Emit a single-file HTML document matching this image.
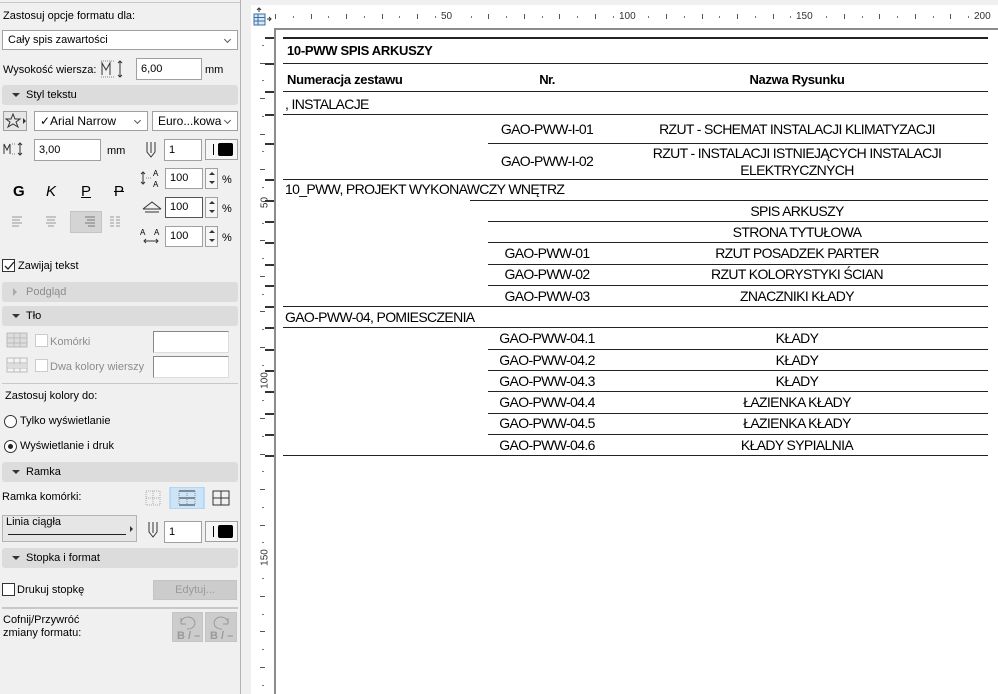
<!DOCTYPE html>
<html><head><meta charset="utf-8">
<style>
*{box-sizing:border-box;margin:0;padding:0}
body{width:998px;height:694px;overflow:hidden;background:#f0f0f0;font-family:"Liberation Sans",sans-serif;font-size:11px;color:#000;position:relative}
.a{position:absolute}
.inp{position:absolute;background:#fff;border:1px solid #a0a0a0;padding:2px 4px;font-size:11px;line-height:14px}
.dd{position:absolute;background:#fff;border:1px solid #a0a0a0;padding:3px 5px;font-size:11px;line-height:13px}
.dd:after{content:"";position:absolute;right:7px;top:6px;width:4px;height:4px;border-right:1px solid #555;border-bottom:1px solid #555;transform:rotate(45deg)}
.hdr{position:absolute;left:2px;width:236px;height:20px;background:#dcdcdc;border-radius:3px;font-size:11px;line-height:20px;padding-left:24px}
.hdr:before{content:"";position:absolute;left:10px;top:8px;border-left:4px solid transparent;border-right:4px solid transparent;border-top:4px solid #333}
.hdr.c:before{left:11px;top:6px;border-top:4px solid transparent;border-bottom:4px solid transparent;border-left:4px solid #aaa;border-right:0}
.cb{position:absolute;width:13px;height:13px;border:1px solid #333;background:#fff}
.rd{position:absolute;width:13px;height:13px;border:1px solid #333;border-radius:50%;background:#fff}
.sp{position:absolute;width:13px;height:21px;border:1px solid #a0a0a0;background:#f6f6f6}
.sp:before{content:"";position:absolute;left:3px;top:3px;border-left:3px solid transparent;border-right:3px solid transparent;border-bottom:3px solid #333}
.sp:after{content:"";position:absolute;left:3px;top:12px;border-left:3px solid transparent;border-right:3px solid transparent;border-top:3px solid #333}
.col{position:absolute;width:33px;height:21px;border:1px solid #a0a0a0;background:#f6f6f6}
.col:before{content:"";position:absolute;left:7px;top:4px;width:1px;height:11px;background:#000}
.col:after{content:"";position:absolute;left:12px;top:3px;width:15px;height:13px;background:#000;border-radius:2px}
.t{position:absolute;font-size:14px;font-family:"Liberation Sans",sans-serif;white-space:nowrap;letter-spacing:-0.65px}
.ln{position:absolute;height:1px;background:#222}
.c2{left:488px;width:118px;text-align:center}
.c3{left:606px;width:382px;text-align:center}
</style></head><body>
<div class="a" style="left:0;top:0;width:241px;height:694px;background:#f0f0f0;border-right:1px solid #b4b4b4"></div>
<div class="a" style="left:0;top:0;width:240px;height:3px;border-bottom:1px solid #c8c8c8"></div>
<div class="a" style="left:3px;top:10px">Zastosuj opcje formatu dla:</div>
<div class="dd" style="left:2px;top:30px;width:236px;height:20px">Cały spis zawartości</div>
<div class="a" style="left:3px;top:64px">Wysokość wiersza:</div>
<svg class="a" style="left:100px;top:59px" width="26" height="20"><path d="M2 16V4l4 7 4-7v12" fill="none" stroke="#333"/><path d="M1 18h14M1 2h14" stroke="#888" stroke-dasharray="1 1"/><path d="M20 2v16M18 4l2-2 2 2M18 16l2 2 2-2" fill="none" stroke="#333"/></svg>
<div class="inp" style="left:136px;top:58px;width:66px;height:22px;line-height:16px">6,00</div>
<div class="a" style="left:205px;top:64px">mm</div>
<div class="hdr" style="top:85px">Styl tekstu</div>
<div class="a" style="left:3px;top:111px;width:24px;height:20px;border:1px solid #a0a0a0;background:#e6e6e6"></div>
<svg class="a" style="left:5px;top:113px" width="22" height="16"><path d="M8 1l2 5h5l-4 3 2 5-5-3-5 3 2-5-4-3h5z" fill="none" stroke="#333"/><path d="M18 5l3 3-3 3z" fill="#333"/></svg>
<div class="dd" style="left:34px;top:111px;width:114px;height:20px;font-size:12px;line-height:12px">✓Arial Narrow</div>
<div class="dd" style="left:152px;top:111px;width:86px;height:20px;font-size:12px;line-height:12px">Euro...kowa</div>
<svg class="a" style="left:3px;top:141px" width="22" height="16"><path d="M1 13V3l3 6 3-6v10" fill="none" stroke="#333"/><path d="M9 13h4M9 3h4" stroke="#888" stroke-dasharray="1 1"/><path d="M17 2v12M15 4l2-2 2 2M15 12l2 2 2-2" fill="none" stroke="#333"/></svg>
<div class="inp" style="left:34px;top:139px;width:67px;height:22px;line-height:16px">3,00</div>
<div class="a" style="left:107px;top:145px">mm</div>
<svg class="a" style="left:145px;top:141px" width="12" height="18"><path d="M2 1v10l4 5 4-5V1M6 1v11" fill="none" stroke="#333"/></svg>
<div class="inp" style="left:164px;top:139px;width:38px;height:22px;line-height:16px">1</div>
<div class="col" style="left:205px;top:139px"></div>
<svg class="a" style="left:140px;top:168px" width="24" height="20"><text x="13" y="8" font-size="8" font-family="Liberation Sans">A</text><text x="13" y="19" font-size="8" font-family="Liberation Sans">A</text><path d="M3 4v12M1 6l2-2 2 2M1 14l2 2 2-2" fill="none" stroke="#333"/><path d="M6 10h6" stroke="#888" stroke-dasharray="1 1"/></svg>
<div class="inp" style="left:165px;top:168px;width:38px;height:21px">100</div>
<div class="sp" style="left:205px;top:168px"></div><div class="a" style="left:222px;top:174px">%</div>
<div class="inp" style="left:165px;top:197px;width:38px;height:21px;border-color:#555">100</div>
<svg class="a" style="left:140px;top:199px" width="24" height="16"><path d="M3 10L12 3l9 7M3 10h18M5 13h14" fill="none" stroke="#333"/></svg>
<div class="sp" style="left:205px;top:197px"></div><div class="a" style="left:222px;top:203px">%</div>
<div class="inp" style="left:165px;top:226px;width:38px;height:21px">100</div>
<svg class="a" style="left:140px;top:226px" width="24" height="20"><text x="0" y="9" font-size="8" font-family="Liberation Sans">A</text><text x="14" y="9" font-size="8" font-family="Liberation Sans">A</text><path d="M4 15h14M6 13l-2 2 2 2M16 13l2 2-2 2" fill="none" stroke="#333"/></svg>
<div class="sp" style="left:205px;top:226px"></div><div class="a" style="left:222px;top:232px">%</div>
<div class="a" style="left:13px;top:183px;font-size:15px;font-weight:bold">G</div>
<div class="a" style="left:46px;top:183px;font-size:15px;font-style:italic">K</div>
<div class="a" style="left:81px;top:183px;font-size:15px;text-decoration:underline">P</div>
<div class="a" style="left:114px;top:183px;font-size:15px;text-decoration:line-through">P</div>
<div class="a" style="left:70px;top:211px;width:32px;height:22px;background:#d4d4d4;border:1px solid #c4c4c4"></div>
<svg class="a" style="left:10px;top:214px" width="120" height="16"><g stroke="#999"><path d="M2 3h10M2 6h8M2 9h10M2 12h7"/><path d="M36 3h10M37 6h8M36 9h10M38 12h6"/><path d="M75 3h10M77 6h8M75 9h10M78 12h7" stroke="#777"/><path d="M100 3h4M106 3h4M100 6h4M106 6h4M100 9h4M106 9h4M100 12h4M106 12h4"/></g></svg>
<div class="cb" style="left:2px;top:259px"></div>
<svg class="a" style="left:3px;top:260px" width="12" height="12"><path d="M2 6l3 3 6-7" fill="none" stroke="#222" stroke-width="1.3"/></svg>
<div class="a" style="left:18px;top:260px">Zawijaj tekst</div>
<div class="hdr c" style="top:282px;color:#8c8c8c">Podgląd</div>
<div class="hdr" style="top:306px">Tło</div>
<svg class="a" style="left:6px;top:332px" width="22" height="46"><g fill="none" stroke="#bbb"><rect x="1" y="1" width="20" height="14" fill="#ddd"/><path d="M1 6h20M1 11h20M8 1v14M14 1v14"/><rect x="1" y="26" width="20" height="14" fill="#f4f4f4"/><path d="M1 31h20M1 36h20M8 26v14M14 26v14"/></g><rect x="2" y="32" width="19" height="4" fill="#ddd"/></svg>
<div class="cb" style="left:35px;top:334px;border-color:#ccc"></div>
<div class="a" style="left:50px;top:336px;color:#8c8c8c">Komórki</div>
<div class="a" style="left:153px;top:331px;width:76px;height:22px;background:#fff;border:1px solid #888;border-right-color:#ddd;border-bottom-color:#ddd"></div>
<div class="cb" style="left:35px;top:359px;border-color:#ccc"></div>
<div class="a" style="left:50px;top:361px;color:#8c8c8c">Dwa kolory wierszy</div>
<div class="a" style="left:153px;top:356px;width:76px;height:22px;background:#fff;border:1px solid #888;border-right-color:#ddd;border-bottom-color:#ddd"></div>
<div class="a" style="left:2px;top:383px;width:236px;height:1px;background:#c8c8c8"></div>
<div class="a" style="left:5px;top:390px">Zastosuj kolory do:</div>
<div class="rd" style="left:4px;top:415px"></div>
<div class="a" style="left:20px;top:415px">Tylko wyświetlanie</div>
<div class="rd" style="left:4px;top:440px"></div><div class="a" style="left:8px;top:444px;width:5px;height:5px;border-radius:50%;background:#222"></div>
<div class="a" style="left:20px;top:440px">Wyświetlanie i druk</div>
<div class="hdr" style="top:462px">Ramka</div>
<div class="a" style="left:2px;top:491px">Ramka komórki:</div>
<svg class="a" style="left:144px;top:487px" width="92" height="22"><rect x="26" y="0" width="34" height="22" fill="#cce4f7" stroke="#99c9ef"/><g fill="none" stroke="#aaa" stroke-dasharray="1 1"><rect x="2" y="4" width="14" height="14"/><path d="M9 4v14M2 11h14"/></g><g fill="none" stroke="#333"><path d="M35 4h16M35 11h16M35 18h16"/><path d="M35 4v14M51 4v14M43 4v14" stroke="#888" stroke-dasharray="1 1"/><rect x="69" y="4" width="16" height="14"/><path d="M77 4v14M69 11h16"/></g></svg>
<div class="a" style="left:2px;top:515px;width:135px;height:27px;border:1px solid #b4b4b4;background:#e6e6e6"></div>
<div class="a" style="left:6px;top:516px;font-size:11px">Linia ciągła</div>
<div class="a" style="left:8px;top:534px;width:118px;height:1px;background:#222"></div>
<div class="a" style="left:130px;top:526px;border-top:3px solid transparent;border-bottom:3px solid transparent;border-left:3px solid #333"></div>
<svg class="a" style="left:147px;top:521px" width="12" height="18"><path d="M2 1v10l4 5 4-5V1M6 1v11" fill="none" stroke="#333"/></svg>
<div class="inp" style="left:164px;top:521px;width:38px;height:22px;line-height:16px">1</div>
<div class="col" style="left:205px;top:521px"></div>
<div class="hdr" style="top:548px">Stopka i format</div>
<div class="cb" style="left:2px;top:583px"></div>
<div class="a" style="left:17px;top:584px">Drukuj stopkę</div>
<div class="a" style="left:153px;top:580px;width:84px;height:20px;background:#cccccc;border:1px solid #c4c4c4;color:#9a9a9a;text-align:center;line-height:18px">Edytuj...</div>
<div class="a" style="left:2px;top:607px;width:236px;height:2px;background:#c8c8c8"></div>
<div class="a" style="left:3px;top:614px;line-height:13px">Cofnij/Przywróć<br>zmiany formatu:</div>
<div class="a" style="left:172px;top:612px;width:31px;height:30px;background:#ccc;border:1px solid #c4c4c4"></div>
<div class="a" style="left:205px;top:612px;width:32px;height:30px;background:#ccc;border:1px solid #c4c4c4"></div>
<svg class="a" style="left:172px;top:612px" width="66" height="30"><g fill="none" stroke="#999"><path d="M9 12a7 6 0 1 1 6 5M9 12V6M9 12h5"/><path d="M56 12a7 6 0 1 0-6 5M56 12V6M56 12h-5"/></g><text x="5" y="27" font-size="11" fill="#999" font-weight="bold" font-family="Liberation Sans">B / –</text><text x="38" y="27" font-size="11" fill="#999" font-weight="bold" font-family="Liberation Sans">B / –</text></svg>

<div class="a" style="left:251px;top:5px;width:747px;height:689px;background:#fff"></div>
<div class="a" style="left:275px;top:28px;width:723px;height:2px;background:#8c8c8c"></div>
<div class="a" style="left:274px;top:28px;width:2px;height:666px;background:#8c8c8c"></div>
<svg class="a" style="left:251px;top:7px" width="22" height="20"><rect x="3" y="7" width="11" height="11" fill="#d8e8f8" stroke="#3a6ea5"/><path d="M3 10.5h11M3 14h11M7 7v11" stroke="#3a6ea5"/><path d="M8 1v4M6 3l2-2 2 2M16 12h4M18 10l2 2-2 2" fill="none" stroke="#333"/></svg>
<div id="rul"></div>

<div class="ln" style="left:283px;top:37px;width:705px;height:2px"></div>
<div class="t" style="left:287px;top:43px;font-weight:bold;font-size:13px;letter-spacing:-0.3px">10-PWW SPIS ARKUSZY</div>
<div class="ln" style="left:283px;top:63px;width:705px"></div>
<div class="t" style="left:287px;top:72px;font-weight:bold;font-size:13px;letter-spacing:-0.3px">Numeracja zestawu</div>
<div class="t c2" style="top:72px;font-weight:bold;font-size:13px">Nr.</div>
<div class="t c3" style="top:72px;font-weight:bold;font-size:13px;letter-spacing:-0.3px">Nazwa Rysunku</div>
<div class="ln" style="left:283px;top:91px;width:705px"></div>
<div class="t" style="left:285px;top:96px">, INSTALACJE</div>
<div class="ln" style="left:283px;top:114px;width:705px"></div>
<div class="t c2" style="top:121px">GAO-PWW-I-01</div>
<div class="t c3" style="top:121px">RZUT - SCHEMAT INSTALACJI KLIMATYZACJI</div>
<div class="ln" style="left:488px;top:143px;width:500px"></div>
<div class="t c2" style="top:153px">GAO-PWW-I-02</div>
<div class="t c3" style="top:145px;line-height:17px;white-space:normal">RZUT - INSTALACJI ISTNIEJĄCYCH INSTALACJI<br>ELEKTRYCZNYCH</div>
<div class="ln" style="left:283px;top:179px;width:705px"></div>
<div class="t" style="left:285px;top:181px">10_PWW, PROJEKT WYKONAWCZY WNĘTRZ</div>
<div class="ln" style="left:470px;top:200px;width:518px"></div>
<div class="t c3" style="top:203px">SPIS ARKUSZY</div>
<div class="ln" style="left:488px;top:221px;width:500px"></div>
<div class="t c3" style="top:224px">STRONA TYTUŁOWA</div>
<div class="ln" style="left:488px;top:242px;width:500px"></div>
<div class="t c2" style="top:245px">GAO-PWW-01</div><div class="t c3" style="top:245px">RZUT POSADZEK PARTER</div>
<div class="ln" style="left:488px;top:264px;width:500px"></div>
<div class="t c2" style="top:266px">GAO-PWW-02</div><div class="t c3" style="top:266px">RZUT KOLORYSTYKI ŚCIAN</div>
<div class="ln" style="left:488px;top:285px;width:500px"></div>
<div class="t c2" style="top:288px">GAO-PWW-03</div><div class="t c3" style="top:288px">ZNACZNIKI KŁADY</div>
<div class="ln" style="left:283px;top:306px;width:705px"></div>
<div class="t" style="left:285px;top:309px">GAO-PWW-04, POMIESCZENIA</div>
<div class="ln" style="left:283px;top:327px;width:705px"></div>
<div class="t c2" style="top:330px">GAO-PWW-04.1</div><div class="t c3" style="top:330px">KŁADY</div>
<div class="ln" style="left:488px;top:349px;width:500px"></div>
<div class="t c2" style="top:352px">GAO-PWW-04.2</div><div class="t c3" style="top:352px">KŁADY</div>
<div class="ln" style="left:488px;top:370px;width:500px"></div>
<div class="t c2" style="top:373px">GAO-PWW-04.3</div><div class="t c3" style="top:373px">KŁADY</div>
<div class="ln" style="left:488px;top:391px;width:500px"></div>
<div class="t c2" style="top:394px">GAO-PWW-04.4</div><div class="t c3" style="top:394px">ŁAZIENKA KŁADY</div>
<div class="ln" style="left:488px;top:413px;width:500px"></div>
<div class="t c2" style="top:415px">GAO-PWW-04.5</div><div class="t c3" style="top:415px">ŁAZIENKA KŁADY</div>
<div class="ln" style="left:488px;top:434px;width:500px"></div>
<div class="t c2" style="top:437px">GAO-PWW-04.6</div><div class="t c3" style="top:437px">KŁADY SYPIALNIA</div>
<div class="ln" style="left:283px;top:455px;width:705px"></div>
<script>
var h='',s=3.555;
for(var i=0;i<=40;i++){var x=Math.round(275+i*5*s);if(x>998)break;
 if(i%10==0&&i>0){h+='<div class="a" style="left:'+(x-12)+'px;top:11px;font-size:10px;color:#333">'+(i*5)+'</div>';}
 else if(i%2==0){h+='<div class="a" style="left:'+x+'px;top:14px;width:1px;height:5px;background:#555"></div>';}
 else{h+='<div class="a" style="left:'+x+'px;top:16px;width:1px;height:2px;background:#777"></div>';}}
for(var i=1;i<=40;i++){var y=Math.round(27+i*5*s);if(y>694)break;
 if(i%10==0){h+='<div class="a" style="left:256px;top:'+(y-8)+'px;font-size:10px;color:#333;transform:rotate(-90deg);transform-origin:center;width:18px;text-align:center">'+(i*5)+'</div>';}
 else if(i%2==0){h+='<div class="a" style="left:260px;top:'+y+'px;width:5px;height:1px;background:#555"></div>';}
 else{h+='<div class="a" style="left:262px;top:'+y+'px;width:2px;height:1px;background:#777"></div>';}}
[37,63,91,114,143,179,200,221,242,264,285,306,327,349,370,391,413,434,455].forEach(function(y){h+='<div class="a" style="left:265px;top:'+y+'px;width:9px;height:2px;background:#333"></div>';});
document.getElementById('rul').innerHTML=h;
</script>
</body></html>
